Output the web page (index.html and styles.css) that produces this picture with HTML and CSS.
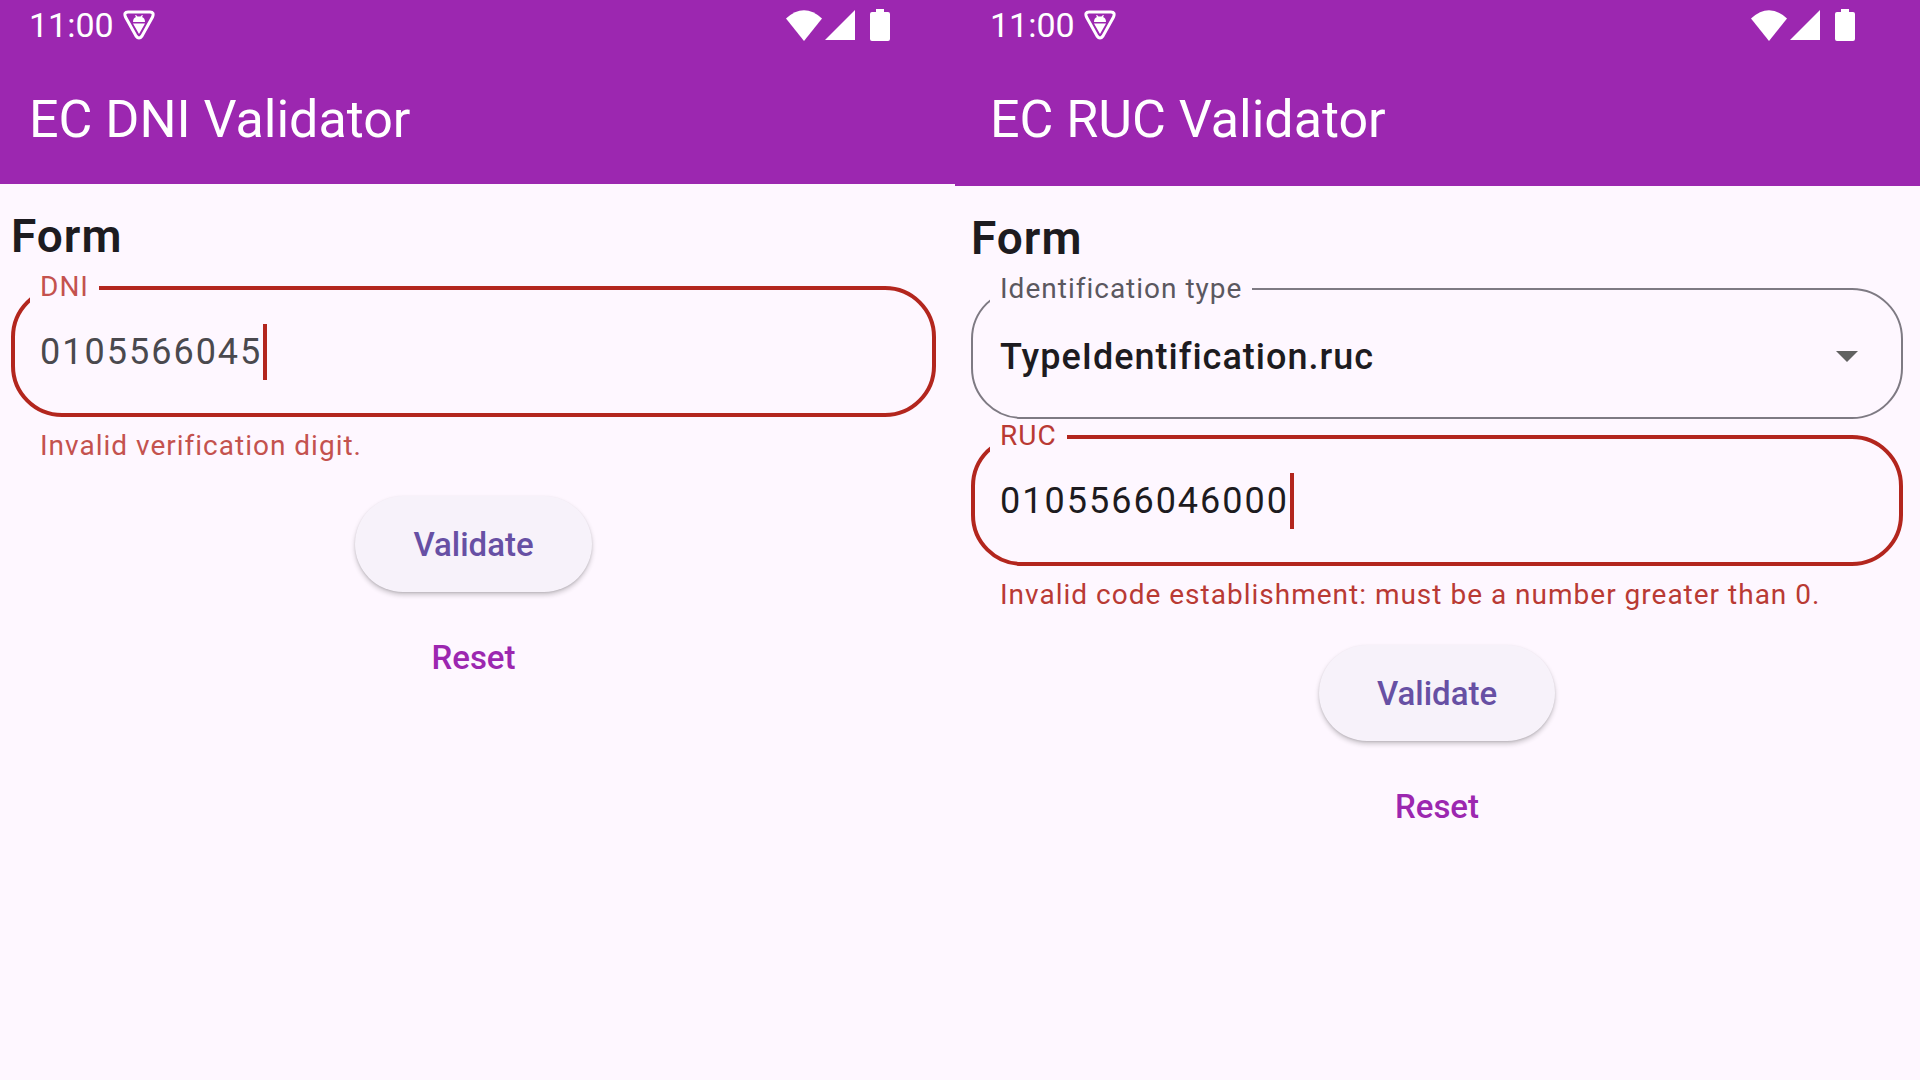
FILE: index.html
```html
<!DOCTYPE html>
<html lang="en">
<head>
<meta charset="utf-8">
<meta name="viewport" content="width=device-width, initial-scale=1">
<title>EC Validator</title>
<link rel="stylesheet" href="styles.css">
</head>
<body>
<svg class="sprite" aria-hidden="true">
  <symbol id="shield" viewBox="0 0 32 30">
    <path d="M5 2H27Q31.500 2 29.500 7L19 26Q16 30 13 26L2.500 7Q.5 2 5 2Z" fill="none" stroke="currentColor" stroke-width="3"/>
    <path d="M10 12Q10 8 13 7L12 5.500L13 5L14.500 6.500H17.500L19 5L20 5.500L19 7Q22 8 22 12ZM10 13.500H22L16 24Z" fill="currentColor"/>
  </symbol>
  <symbol id="wifi" viewBox="0 0 36 31"><path d="M0 8.500Q18-8 36 8.500L18 31Z" fill="currentColor"/></symbol>
  <symbol id="signal" viewBox="0 0 30 30"><path d="M30 0V30H0Z" fill="currentColor"/></symbol>
  <symbol id="battery" viewBox="0 0 20 32"><path d="M6 0H14V3H18Q20 3 20 5V30Q20 32 18 32H2Q0 32 0 30V5Q0 3 2 3H6Z" fill="currentColor"/></symbol>
</svg>
<main class="screens">
  <section class="screen screen-dni">
    <header class="app-bar">
      <div class="status">
        <span class="time">11:00</span>
        <svg class="icon-shield"><use href="#shield"/></svg>
        <div class="status-icons">
          <svg class="icon-wifi"><use href="#wifi"/></svg>
          <svg class="icon-signal"><use href="#signal"/></svg>
          <svg class="icon-battery"><use href="#battery"/></svg>
        </div>
      </div>
      <h1 class="title">EC DNI Validator</h1>
    </header>
    <form class="form">
      <h2 class="heading">Form</h2>
      <div class="field field-error">
        <label class="label" for="dni">DNI</label>
        <input class="input input-dni" id="dni" type="text" value="0105566045" aria-describedby="dni-error">
        <span class="caret"></span>
      </div>
      <p class="error" id="dni-error">Invalid verification digit.</p>
      <div class="actions">
        <button class="button button-raised" type="button">Validate</button>
        <button class="button button-text" type="reset">Reset</button>
      </div>
    </form>
  </section>
  <section class="screen screen-ruc">
    <header class="app-bar">
      <div class="status">
        <span class="time">11:00</span>
        <svg class="icon-shield"><use href="#shield"/></svg>
        <div class="status-icons">
          <svg class="icon-wifi"><use href="#wifi"/></svg>
          <svg class="icon-signal"><use href="#signal"/></svg>
          <svg class="icon-battery"><use href="#battery"/></svg>
        </div>
      </div>
      <h1 class="title">EC RUC Validator</h1>
    </header>
    <form class="form">
      <h2 class="heading">Form</h2>
      <div class="field field-select">
        <label class="label" for="type">Identification type</label>
        <select class="select" id="type"><option>TypeIdentification.ruc</option></select>
        <svg class="arrow" viewBox="0 0 22 11"><path d="M0 0H22L11 11Z" fill="currentColor"/></svg>
      </div>
      <div class="field field-error">
        <label class="label" for="ruc">RUC</label>
        <input class="input input-ruc" id="ruc" type="text" value="0105566046000" aria-describedby="ruc-error">
        <span class="caret"></span>
      </div>
      <p class="error" id="ruc-error">Invalid code establishment: must be a number greater than 0.</p>
      <div class="actions">
        <button class="button button-raised" type="button">Validate</button>
        <button class="button button-text" type="reset">Reset</button>
      </div>
    </form>
  </section>
</main>
</body>
</html>
```
FILE: styles.css
```css
:root {
  --purple: #9c27b0;
  --surface: #fef7ff;
  --ink: #1d1b20;
  --red: #b3261e;
}

* {
  box-sizing: border-box;
}

body {
  margin: 0;
  background: var(--surface);
  color: var(--ink);
  font-family: Roboto, sans-serif;
}

.sprite {
  display: none;
}

.screens {
  display: grid;
  grid-template-columns: 955fr 965fr;
  min-height: 100vh;
}

.screen-dni {
  --bar-left: 29px;
  --bar-bottom: 28px;
  --form-left: 11px;
  --form-right: 19px;
  --digit: #4a494e;
  --label-red: #c4524e;
}

.screen-ruc {
  --bar-left: 35px;
  --bar-bottom: 30px;
  --form-left: 16px;
  --form-right: 17px;
  --digit: #1d1b20;
  --label-red: #b93a34;
}

.app-bar {
  padding: 5px 0 var(--bar-bottom) var(--bar-left);
  background: var(--purple);
  color: #fff;
}

.status {
  display: flex;
  align-items: center;
  height: 40px;
  padding-right: 65px;
}

.time {
  margin-right: 9px;
  font-size: 34px;
  line-height: 40px;
}

.icon-shield {
  width: 32px;
  height: 30px;
}

.status-icons {
  display: flex;
  align-items: center;
  margin-left: auto;
}

.icon-wifi {
  width: 36px;
  height: 31px;
  margin-right: 3px;
}

.icon-signal {
  width: 30px;
  height: 30px;
  margin-right: 15px;
}

.icon-battery {
  width: 20px;
  height: 32px;
}

.title {
  margin: 39px 0 0;
  font-size: 52px;
  font-weight: 400;
  line-height: 72px;
}

.form {
  padding: 24px var(--form-right) 24px var(--form-left);
}

.heading {
  margin: 0 0 22px;
  font-size: 46px;
  font-weight: 600;
  letter-spacing: 1px;
  line-height: 56px;
}

.field {
  position: relative;
  display: flex;
  align-items: center;
  height: 131px;
  padding: 0 26px;
  border: 2px solid #7e7a83;
  border-radius: 51px;
}

.field + .field {
  margin-top: 16px;
}

.field-select {
  padding: 6px 27px 0;
}

.field-error {
  padding: 0 25px;
  border: 4px solid var(--red);
}

.label {
  position: absolute;
  top: -17px;
  left: 17px;
  padding: 0 10px;
  background: var(--surface);
  color: #5b5860;
  font-size: 28px;
  letter-spacing: 1px;
  line-height: 32px;
}

.field-error .label {
  top: -19px;
  left: 15px;
  color: var(--label-red);
}

.input,
.select {
  height: 56px;
  padding: 0;
  border: 0;
  outline: 0;
  background: none;
  font-family: inherit;
  font-size: 36px;
}

.input {
  color: var(--digit);
  letter-spacing: 2px;
}

.input-dni {
  width: 223px;
}

.input-ruc {
  width: 290px;
}

.caret {
  width: 4px;
  height: 56px;
  background: var(--red);
}

.select {
  flex: 1;
  appearance: none;
  color: var(--ink);
  font-weight: 500;
  letter-spacing: 1px;
}

.arrow {
  width: 22px;
  height: 11px;
  margin-right: 16px;
  color: #616161;
}

.error {
  margin: 11px 29px 32px;
  color: var(--label-red);
  font-size: 28px;
  letter-spacing: 1px;
  line-height: 36px;
}

.actions {
  display: flex;
  flex-direction: column;
  align-items: center;
  gap: 17px;
}

.button {
  height: 96px;
  padding: 0 58px;
  border: 0;
  border-radius: 48px;
  background: none;
  font-family: inherit;
  font-size: 33px;
  font-weight: 500;
}

.button-raised {
  background: #f7f2fa;
  box-shadow: 0 3px 5px rgba(0, 0, 0, .2), 0 1px 2px rgba(0, 0, 0, .1);
  color: #6750a4;
}

.button-text {
  color: var(--purple);
}
```
